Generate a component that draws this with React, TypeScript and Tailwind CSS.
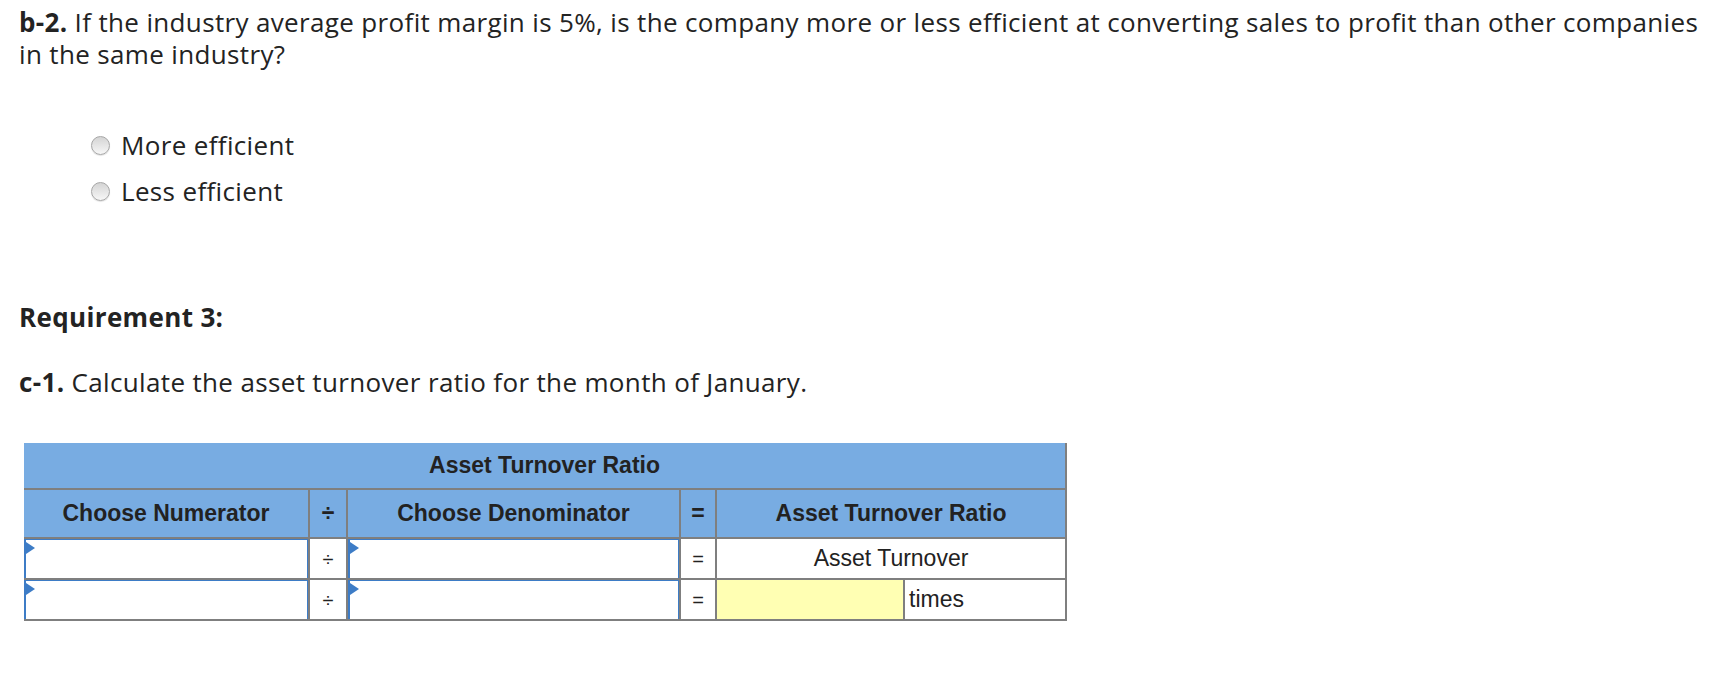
export default function App() {
  return (
    <div className="min-h-screen bg-white pl-[19px] pt-[6px] font-['Open_Sans','Noto_Sans',sans-serif] text-[26px] tracking-[0.35px] text-[#232323]">
      <p className="max-w-[1700px] leading-[32px]">
        <b>b-2.</b> If the industry average profit margin is 5%, is the company more or less efficient at converting
        sales to profit than other companies in the same industry?
      </p>

      <div className="mt-[52px] pl-[72px]">
        <RadioOption label="More efficient" />
        <RadioOption label="Less efficient" />
      </div>

      <h3 className="mt-[87px] font-bold leading-[32px]">Requirement 3:</h3>

      <p className="mt-[33px] leading-[32px]">
        <b>c-1.</b> Calculate the asset turnover ratio for the month of January.
      </p>

      <AssetTurnoverTable />
    </div>
  );
}

function RadioOption({ label }: { label: string }) {
  return (
    <label className="flex h-[46px] items-center gap-[11px]">
      <span className="h-[19px] w-[19px] shrink-0 rounded-full border border-[#a6a6a6] bg-linear-to-b from-[#d4d4d4] to-[#f7f7f7] shadow-[0_1px_1px_rgba(0,0,0,0.12)]" />
      <span className="leading-[32px]">{label}</span>
    </label>
  );
}

function InputCell() {
  return (
    <td className="border-2 border-l-0 border-[#7f7f7f] p-0">
      <div className="relative h-[39px] border-t border-r border-l-2 border-[#3d7cc6] bg-white">
        <span className="absolute left-0 top-[2px] h-0 w-0 border-y-[6px] border-l-[9px] border-y-transparent border-l-[#3d7cc6]" />
      </div>
    </td>
  );
}

function AssetTurnoverTable() {
  const cell = "border-2 border-[#7f7f7f] text-center";
  return (
    <table className="mt-[45px] ml-[5px] w-[1042px] table-fixed border-collapse font-['Liberation_Sans',Arial,sans-serif] text-[23px] tracking-normal text-[#222]">
      <colgroup>
        <col className="w-[285px]" />
        <col className="w-[38px]" />
        <col className="w-[333px]" />
        <col className="w-[36px]" />
        <col className="w-[188px]" />
        <col className="w-[162px]" />
      </colgroup>
      <tbody>
        <tr className="h-[46px] bg-[#78ace2]">
          <td colSpan={6} className="border-2 border-t-0 border-l-0 border-[#7f7f7f] text-center font-bold">
            Asset Turnover Ratio
          </td>
        </tr>
        <tr className="h-[49px] bg-[#78ace2] font-bold">
          <td className={`${cell} border-l-0`}>Choose Numerator</td>
          <td className={cell}>÷</td>
          <td className={cell}>Choose Denominator</td>
          <td className={cell}>=</td>
          <td colSpan={2} className={cell}>
            Asset Turnover Ratio
          </td>
        </tr>
        <tr className="h-[41px]">
          <InputCell />
          <td className={`${cell} text-[20px]`}>÷</td>
          <InputCell />
          <td className={`${cell} text-[20px]`}>=</td>
          <td colSpan={2} className={cell}>
            Asset Turnover
          </td>
        </tr>
        <tr className="h-[41px]">
          <InputCell />
          <td className={`${cell} text-[20px]`}>÷</td>
          <InputCell />
          <td className={`${cell} text-[20px]`}>=</td>
          <td className={`${cell} bg-[#ffffb3]`}></td>
          <td className="border-2 border-[#7f7f7f] pl-[4px] text-left">times</td>
        </tr>
      </tbody>
    </table>
  );
}
